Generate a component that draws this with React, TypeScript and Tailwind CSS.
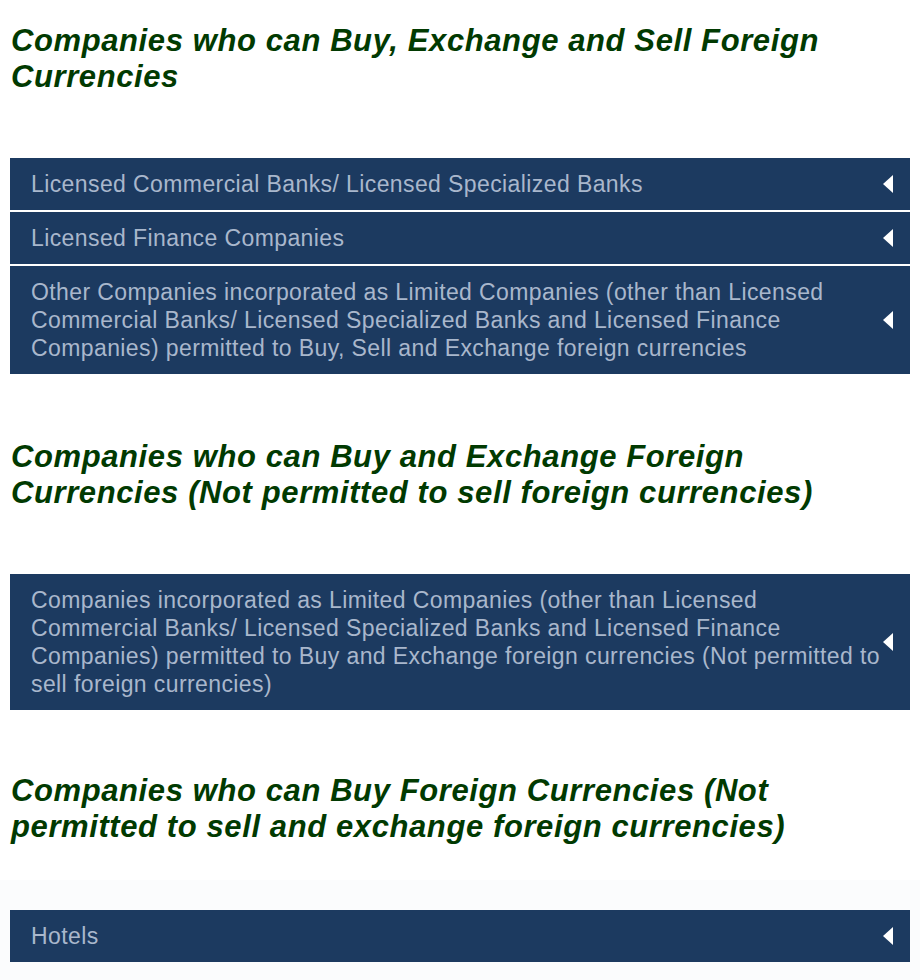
import React from "react";

type Section = {
  title: string;
  items: string[];
};

const sections: Section[] = [
  {
    title: "Companies who can Buy, Exchange and Sell Foreign Currencies",
    items: [
      "Licensed Commercial Banks/ Licensed Specialized Banks",
      "Licensed Finance Companies",
      "Other Companies incorporated as Limited Companies (other than Licensed Commercial Banks/ Licensed Specialized Banks and Licensed Finance Companies) permitted to Buy, Sell and Exchange foreign currencies",
    ],
  },
  {
    title:
      "Companies who can Buy and Exchange Foreign Currencies (Not permitted to sell foreign currencies)",
    items: [
      "Companies incorporated as Limited Companies (other than Licensed Commercial Banks/ Licensed Specialized Banks and Licensed Finance Companies) permitted to Buy and Exchange foreign currencies (Not permitted to sell foreign currencies)",
    ],
  },
  {
    title:
      "Companies who can Buy Foreign Currencies (Not permitted to sell and exchange foreign currencies)",
    items: ["Hotels"],
  },
];

function Caret() {
  return (
    <svg
      width="10"
      height="18"
      viewBox="0 0 10 18"
      className="absolute right-[17px] top-1/2 -translate-y-1/2"
    >
      <polygon points="10,0 10,18 0,9" fill="#ffffff" />
    </svg>
  );
}

function AccordionRow({ label }: { label: string }) {
  return (
    <button className="relative block w-full bg-[#1c3a60] py-3 pl-[21px] pr-[20px] text-left">
      <span className="block text-[23px] leading-[28px] tracking-[0.4px] text-[#a9b7cc]">
        {label}
      </span>
      <Caret />
    </button>
  );
}

function Heading({ children }: { children: React.ReactNode }) {
  return (
    <h2 className="pl-[1px] text-[31px] font-bold italic leading-[36px] tracking-[0.6px] text-[#013a01]">
      {children}
    </h2>
  );
}

export default function App() {
  const [first, second, third] = sections;
  return (
    <div className="min-h-[980px] bg-white font-['Liberation_Sans',Arial,sans-serif]">
      <div className="px-[10px] pt-[23px]">
        <Heading>{first.title}</Heading>
        <div className="mt-[63px] flex flex-col gap-[2px]">
          {first.items.map((item) => (
            <AccordionRow key={item} label={item} />
          ))}
        </div>

        <div className="mt-[65px]">
          <Heading>{second.title}</Heading>
        </div>
        <div className="mt-[63px] flex flex-col gap-[2px]">
          {second.items.map((item) => (
            <AccordionRow key={item} label={item} />
          ))}
        </div>

        <div className="mt-[63px]">
          <Heading>{third.title}</Heading>
        </div>
      </div>

      {/* lower band sits on a faintly tinted strip */}
      <div className="mt-[35px] min-h-[100px] bg-[#fbfcfd] px-[10px] pt-[30px]">
        <div className="flex flex-col gap-[2px]">
          {third.items.map((item) => (
            <AccordionRow key={item} label={item} />
          ))}
        </div>
      </div>
    </div>
  );
}
